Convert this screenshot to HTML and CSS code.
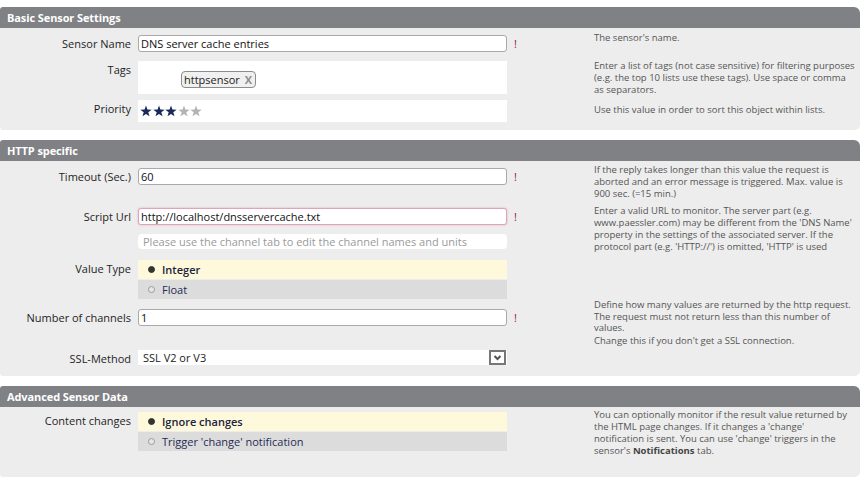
FILE: index.html
```html
<!DOCTYPE html>
<html lang="en">
<head>
<meta charset="utf-8">
<title>Sensor Settings</title>
<link rel="stylesheet" href="styles.css">
</head>
<body>
<div class="page">

  <section class="panel">
    <h2 class="panel-head">Basic Sensor Settings</h2>
    <div class="panel-body">
      <div class="row row-name">
        <label class="label">Sensor Name</label>
        <div class="field"><div class="input">DNS server cache entries</div></div>
        <span class="req">!</span>
        <p class="help">The sensor's name.</p>
      </div>
      <div class="row row-tags">
        <label class="label">Tags</label>
        <div class="field">
          <div class="tagbox"><span class="tag">httpsensor<b class="tag-x">X</b></span></div>
        </div>
        <p class="help">Enter a list of tags (not case sensitive) for filtering purposes<br>(e.g. the top 10 lists use these tags). Use space or comma<br>as separators.</p>
      </div>
      <div class="row row-priority">
        <label class="label">Priority</label>
        <div class="field">
          <div class="stars">
            <svg class="star on" viewBox="0 0 12 12"><polygon points="6,0.5 7.41,4.56 11.71,4.65 8.28,7.24 9.53,11.35 6,8.9 2.47,11.35 3.72,7.24 0.29,4.65 4.59,4.56"/></svg>
            <svg class="star on" viewBox="0 0 12 12"><polygon points="6,0.5 7.41,4.56 11.71,4.65 8.28,7.24 9.53,11.35 6,8.9 2.47,11.35 3.72,7.24 0.29,4.65 4.59,4.56"/></svg>
            <svg class="star on" viewBox="0 0 12 12"><polygon points="6,0.5 7.41,4.56 11.71,4.65 8.28,7.24 9.53,11.35 6,8.9 2.47,11.35 3.72,7.24 0.29,4.65 4.59,4.56"/></svg>
            <svg class="star" viewBox="0 0 12 12"><polygon points="6,0.5 7.41,4.56 11.71,4.65 8.28,7.24 9.53,11.35 6,8.9 2.47,11.35 3.72,7.24 0.29,4.65 4.59,4.56"/></svg>
            <svg class="star" viewBox="0 0 12 12"><polygon points="6,0.5 7.41,4.56 11.71,4.65 8.28,7.24 9.53,11.35 6,8.9 2.47,11.35 3.72,7.24 0.29,4.65 4.59,4.56"/></svg>
          </div>
        </div>
        <p class="help">Use this value in order to sort this object within lists.</p>
      </div>
    </div>
  </section>

  <section class="panel">
    <h2 class="panel-head">HTTP specific</h2>
    <div class="panel-body">
      <div class="row row-timeout">
        <label class="label">Timeout (Sec.)</label>
        <div class="field"><div class="input">60</div></div>
        <span class="req">!</span>
        <p class="help">If the reply takes longer than this value the request is<br>aborted and an error message is triggered. Max. value is<br>900 sec. (=15 min.)</p>
      </div>
      <div class="row row-url">
        <label class="label">Script Url</label>
        <div class="field">
          <div class="input input-focus">http://localhost/dnsservercache.txt</div>
          <div class="hint">Please use the channel tab to edit the channel names and units</div>
        </div>
        <span class="req">!</span>
        <p class="help">Enter a valid URL to monitor. The server part (e.g.<br>www.paessler.com) may be different from the 'DNS Name'<br>property in the settings of the associated server. If the<br>protocol part (e.g. 'HTTP://') is omitted, 'HTTP' is used</p>
      </div>
      <div class="row row-valuetype">
        <label class="label">Value Type</label>
        <div class="field">
          <div class="option selected"><span class="dot"></span>Integer</div>
          <div class="option"><span class="dot"></span>Float</div>
        </div>
      </div>
      <div class="row row-channels">
        <label class="label">Number of channels</label>
        <div class="field"><div class="input">1</div></div>
        <span class="req">!</span>
        <p class="help">Define how many values are returned by the http request.<br>The request must not return less than this number of<br>values.</p>
      </div>
      <div class="row row-ssl">
        <label class="label">SSL-Method</label>
        <div class="field">
          <div class="select">
            <span>SSL V2 or V3</span>
            <span class="select-arrow"><svg viewBox="0 0 13 11" width="13" height="11"><path d="M3.5 4 L6.5 7 L9.5 4" /></svg></span>
          </div>
        </div>
        <p class="help">Change this if you don't get a SSL connection.</p>
      </div>
    </div>
  </section>

  <section class="panel">
    <h2 class="panel-head">Advanced Sensor Data</h2>
    <div class="panel-body compact">
      <div class="row row-content">
        <label class="label">Content changes</label>
        <div class="field">
          <div class="option selected"><span class="dot"></span>Ignore changes</div>
          <div class="option"><span class="dot"></span>Trigger 'change' notification</div>
        </div>
        <p class="help">You can optionally monitor if the result value returned by<br>the HTML page changes. If it changes a 'change'<br>notification is sent. You can use 'change' triggers in the<br>sensor's <b>Notifications</b> tab.</p>
      </div>
    </div>
  </section>

</div>
</body>
</html>
```
FILE: styles.css
```css
* { box-sizing: border-box; }

html, body {
  margin: 0;
  padding: 0;
  background: #ffffff;
}

body {
  font-family: "Open Sans", "Noto Sans", sans-serif;
  color: #222222;
}

.page {
  padding: 7px 7px 0 0;
}

.panel {
  margin-bottom: 10px;
}

.panel-head {
  margin: 0;
  height: 21px;
  padding-left: 7px;
  background: #808185;
  color: #ffffff;
  font-size: 11px;
  font-weight: 700;
  line-height: 21px;
  letter-spacing: -0.1px;
  border-radius: 3px 6px 0 0;
}

.panel-body {
  background: #ededed;
  border-radius: 0 0 5px 3px;
  padding: 7px 0 8px;
}

.panel-body.compact {
  padding-top: 5px;
}

/* form rows */
.row {
  display: grid;
  grid-template-columns: 131px 369px 73px 1fr;
  column-gap: 7px;
  align-items: start;
}

.row > * { grid-row: 1; }

.row-name { height: 26px; }
.row-tags { height: 39px; }
.row-priority { height: 22px; }
.row-timeout { height: 40px; }
.row-url { height: 52px; }
.row-valuetype { height: 49px; }
.row-channels { height: 41px; }
.row-ssl { height: 18px; }
.row-content { height: 57px; }

.label {
  grid-column: 1;
  text-align: right;
  font-size: 11px;
  line-height: 17px;
  color: #1e1e1e;
}

.field { grid-column: 2; }

.req {
  grid-column: 3;
  color: #9c1a48;
  font-size: 11px;
  line-height: 17px;
}

.help {
  grid-column: 4;
  margin: -3px 0 0;
  font-size: 9.5px;
  line-height: 12px;
  color: #555555;
  white-space: nowrap;
}

.help b { color: #444444; }

.row-tags .help { margin-top: -1px; }
.row-priority .help { margin-top: 4px; }
.row-timeout .help { margin-top: -4px; }
.row-channels .help { margin-top: -10px; line-height: 11.5px; }
.row-ssl .help { margin-top: -15px; }

/* controls */
.input {
  height: 17px;
  padding: 0 2px;
  background: #ffffff;
  border: 1px solid #a9a9a9;
  border-radius: 3px;
  font-size: 11px;
  line-height: 15px;
  color: #111111;
}

.input-focus {
  border-color: #dfa3bb;
  box-shadow: 0 0 2px rgba(224, 130, 170, 0.7);
}

.hint {
  margin-top: 9px;
  height: 15px;
  padding-left: 5px;
  background: #ffffff;
  border-radius: 4px;
  font-size: 11px;
  line-height: 15px;
  color: #9a9a9a;
}

.tagbox {
  height: 33px;
  padding: 6px 0 0 43px;
  background: #ffffff;
}

.tag {
  display: inline-flex;
  align-items: center;
  gap: 5px;
  height: 17px;
  padding: 0 3px 0 2px;
  background: #f0f0f0;
  border: 1px solid #8c8c8c;
  border-radius: 4px;
  font-size: 11px;
  line-height: 15px;
  color: #222222;
}

.tag-x {
  color: #8e8e8e;
  font-weight: 700;
}

.stars {
  display: flex;
  gap: 0.5px;
  height: 22px;
  padding: 5px 0 0 2px;
  background: #ffffff;
}

.star {
  width: 12px;
  height: 12px;
  fill: #b3b3b3;
}

.star.on { fill: #172a5a; }

.option {
  display: flex;
  align-items: center;
  gap: 7px;
  height: 19px;
  padding-left: 10px;
  background: #dcdcdc;
  font-size: 11px;
  color: #1f2b55;
}

.option + .option { margin-top: 1px; }

.option.selected {
  background: #fff9dc;
  font-weight: 600;
  color: #1a2340;
}

.dot {
  width: 7px;
  height: 7px;
  border-radius: 50%;
  border: 1px solid #9a9a9a;
  background: #e6e6e6;
}

.option.selected .dot {
  border-color: #333333;
  background: #333333;
}

.select {
  display: flex;
  justify-content: space-between;
  align-items: center;
  height: 15px;
  padding: 0 1px 0 5px;
  background: #ffffff;
  font-size: 11px;
  color: #222222;
}

.select-arrow {
  display: flex;
  align-items: center;
  justify-content: center;
  width: 17px;
  height: 15px;
  border: 2px solid #777777;
  background: #ffffff;
}

.select-arrow path {
  fill: none;
  stroke: #555555;
  stroke-width: 2;
}
```
